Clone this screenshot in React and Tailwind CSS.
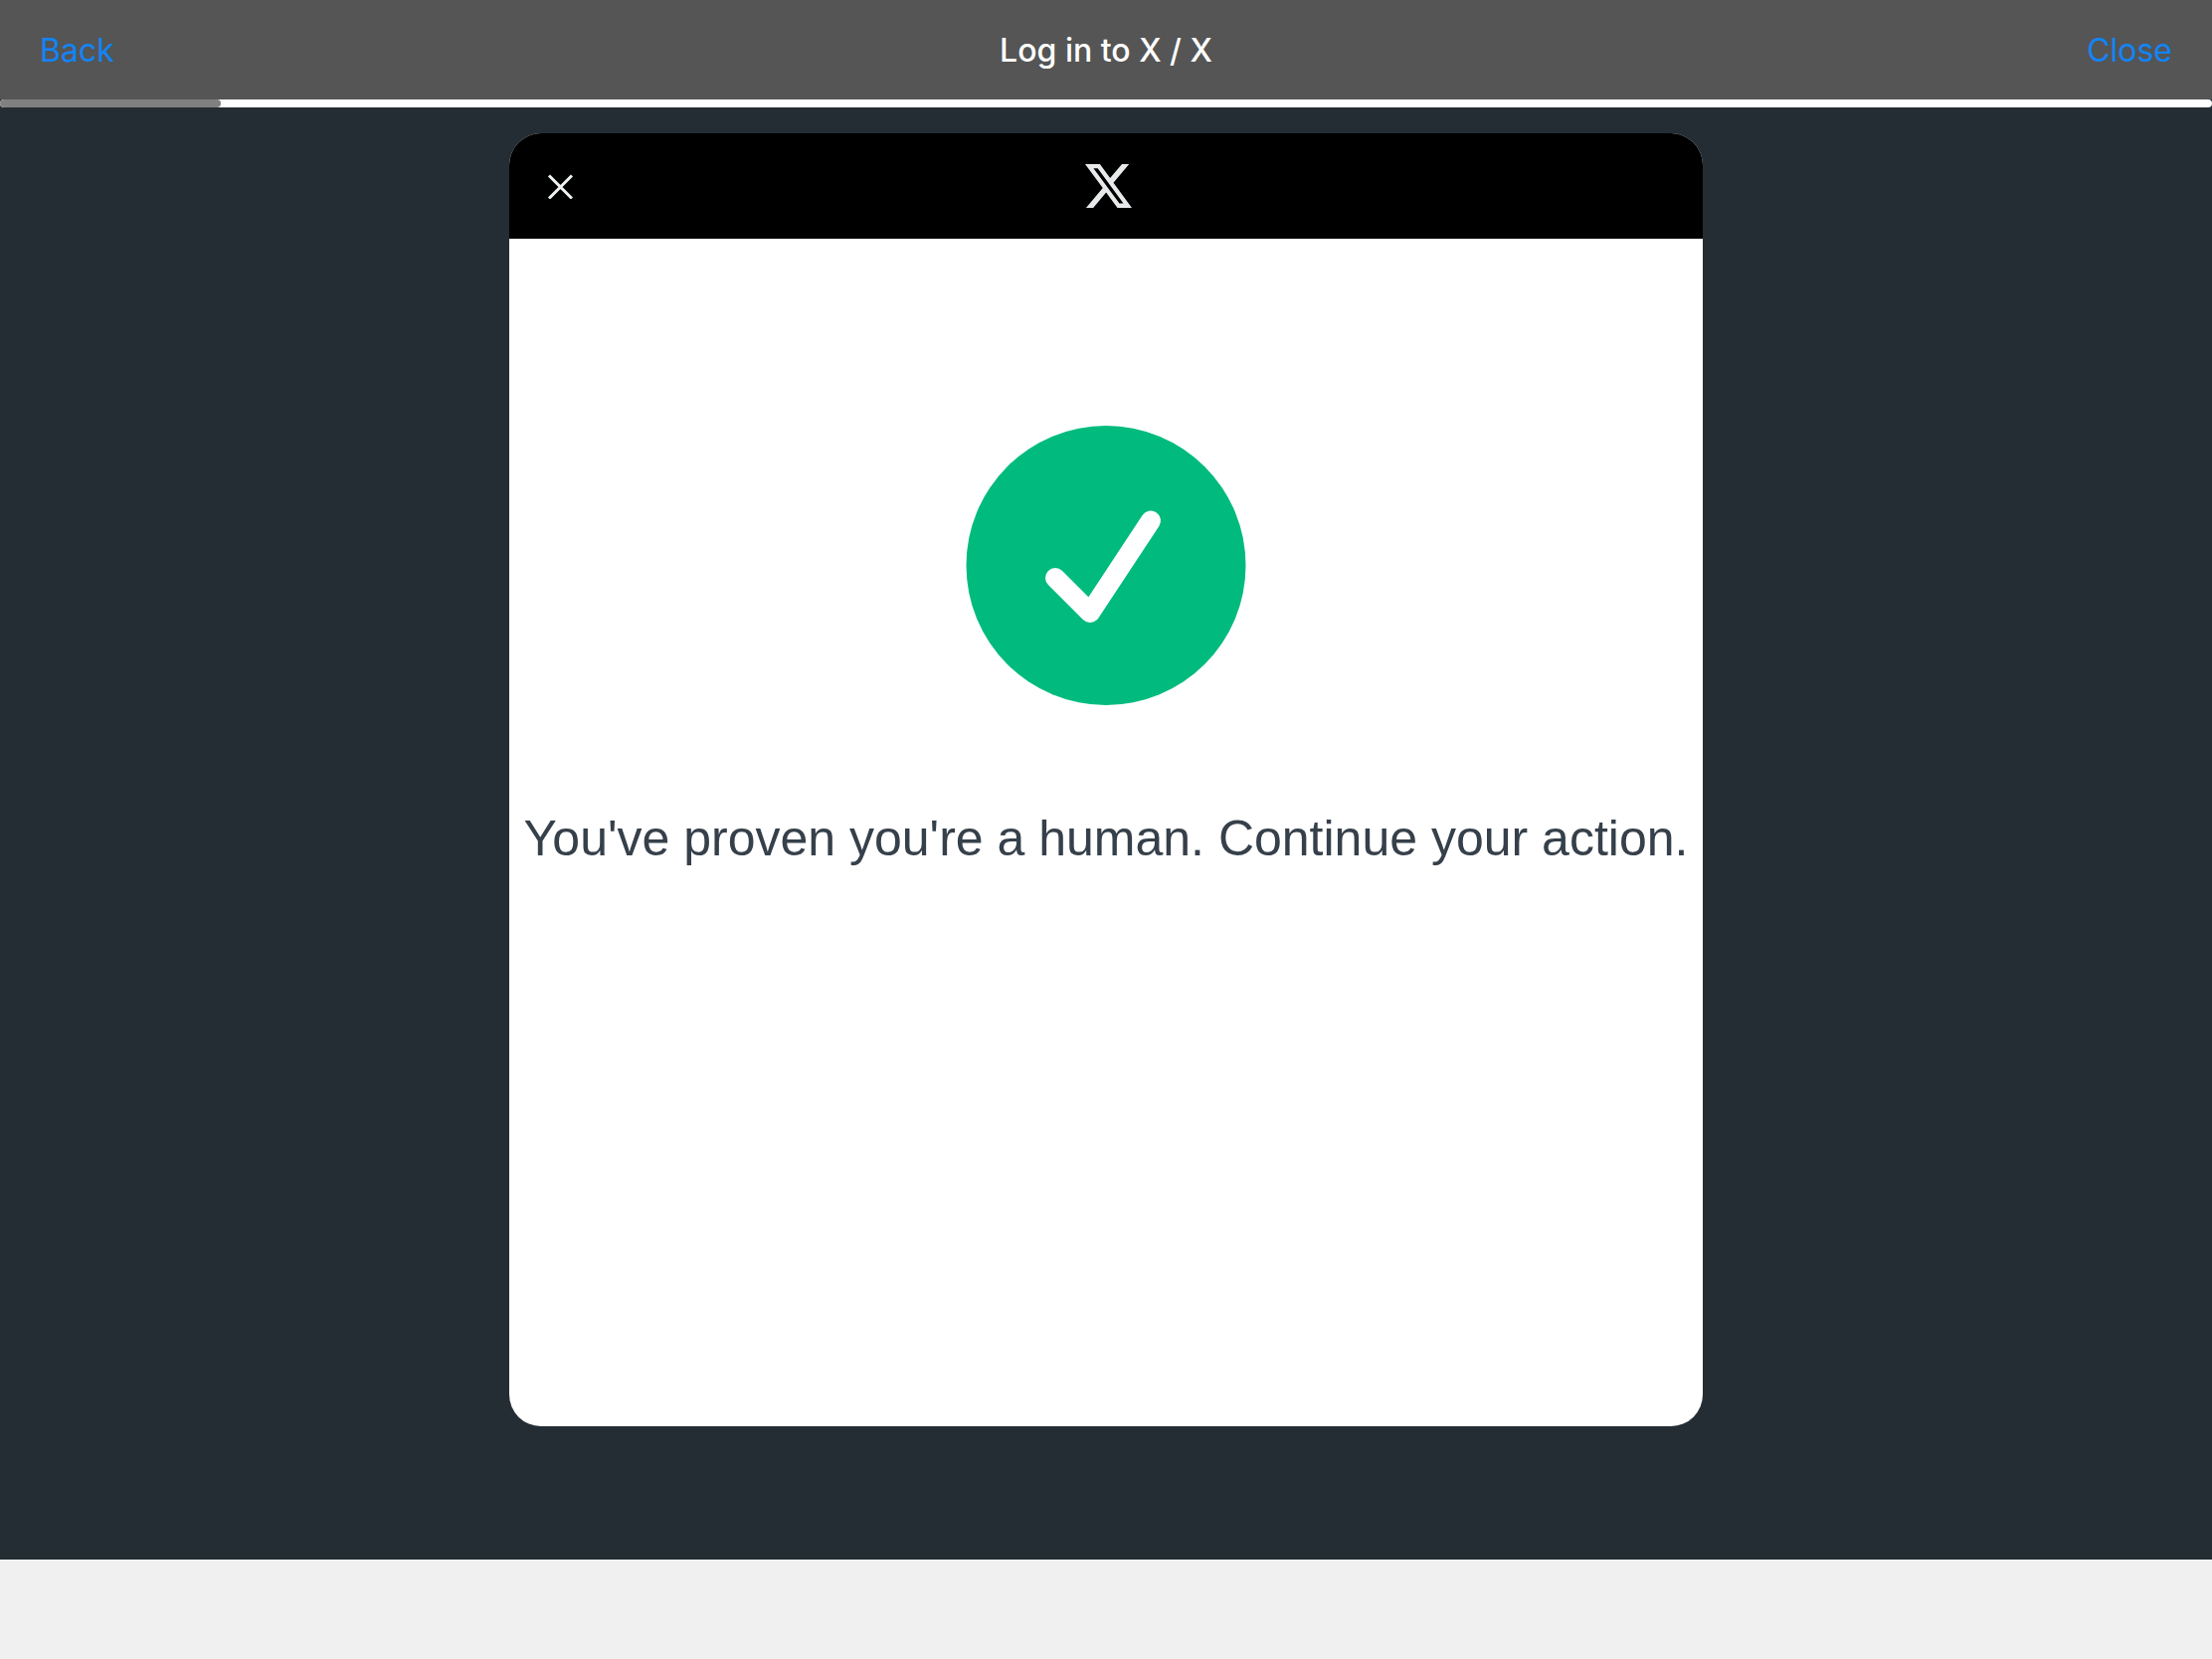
function NavBar() {
  return (
    <nav className="grid h-[100px] grid-cols-[1fr_auto_1fr] items-center bg-[#555555] px-10 pt-0.5 font-['Inter',sans-serif] text-[32px] leading-10">
      <button type="button" className="justify-self-start text-[#1284f7]">Back</button>
      <h1 className="font-medium text-white">Log in to X / X</h1>
      <button type="button" className="justify-self-end text-[#1284f7]">Close</button>
    </nav>
  );
}

function LoadingBar({ value }) {
  return (
    <div
      role="progressbar"
      aria-label="Page loading"
      aria-valuenow={value}
      className="h-2 overflow-hidden rounded-full bg-[#fdfdfd]"
    >
      <div className="h-full rounded-full bg-[#808080]" style={{ width: `${value}%` }} />
    </div>
  );
}

function XLogo() {
  return (
    <svg viewBox="1.254 2.25 21.573 19.5" preserveAspectRatio="none" className="h-11 w-[47px]" fill="#e7e9ea" aria-label="X">
      <path d="M18.244 2.25h3.308l-7.227 8.26 8.502 11.24H16.17l-5.214-6.817L4.99 21.75H1.68l7.73-8.835L1.254 2.25H8.08l4.713 6.231zm-1.161 17.52h1.833L7.084 4.126H5.117z" />
    </svg>
  );
}

function CloseIcon() {
  return (
    <svg viewBox="0 0 26 26" className="size-[26px]" fill="none" stroke="#eff3f4" strokeWidth="3" aria-hidden="true">
      <path d="M2 2.500l23 23M25 2.500l-23 23" />
    </svg>
  );
}

function CheckBadge() {
  return (
    <svg viewBox="0 0 282 282" className="size-[282px]" aria-hidden="true">
      <circle cx="141" cy="141.500" r="140.500" fill="#00bb7d" />
      <path
        d="M90 154l35 35 61-92.500"
        fill="none"
        stroke="#fff"
        strokeWidth="20"
        strokeLinecap="round"
        strokeLinejoin="round"
      />
    </svg>
  );
}

export default function App() {
  return (
    <div className="flex min-h-screen flex-col bg-[#242d34]">
      <NavBar />
      <LoadingBar value={10} />

      <main className="flex grow justify-center pt-[26px] pb-[134px]">
        <section className="flex w-full max-w-[1200px] flex-col overflow-hidden rounded-[32px] bg-white">
          <header className="grid h-[106px] shrink-0 grid-cols-[1fr_auto_1fr] items-center bg-black pr-[34px] pl-[38px]">
            <button type="button" aria-label="Close dialog" className="justify-self-start">
              <CloseIcon />
            </button>
            <XLogo />
          </header>

          <div className="flex grow flex-col items-center pt-[187px]">
            <CheckBadge />
            <p className="mt-[104px] text-center font-['Liberation_Sans',Arial,sans-serif] text-[50px] leading-[60px] text-[#36404a]">
              You&apos;ve proven you&apos;re a human. Continue your action.
            </p>
          </div>
        </section>
      </main>

      <footer className="h-[100px] bg-[#f0f0f0]" />
    </div>
  );
}
